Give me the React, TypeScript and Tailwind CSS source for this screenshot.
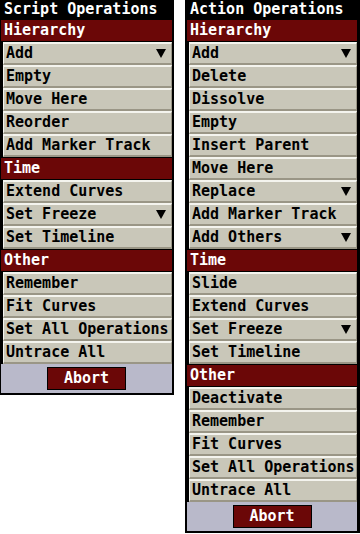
import React from 'react'

type Entry = { label: string; menu?: boolean }
type Group = { title: string; items: Entry[] }

const scriptOps: Group[] = [
  {
    title: 'Hierarchy',
    items: [
      { label: 'Add', menu: true },
      { label: 'Empty' },
      { label: 'Move Here' },
      { label: 'Reorder' },
      { label: 'Add Marker Track' },
    ],
  },
  {
    title: 'Time',
    items: [{ label: 'Extend Curves' }, { label: 'Set Freeze', menu: true }, { label: 'Set Timeline' }],
  },
  {
    title: 'Other',
    items: [{ label: 'Remember' }, { label: 'Fit Curves' }, { label: 'Set All Operations' }, { label: 'Untrace All' }],
  },
]

const actionOps: Group[] = [
  {
    title: 'Hierarchy',
    items: [
      { label: 'Add', menu: true },
      { label: 'Delete' },
      { label: 'Dissolve' },
      { label: 'Empty' },
      { label: 'Insert Parent' },
      { label: 'Move Here' },
      { label: 'Replace', menu: true },
      { label: 'Add Marker Track' },
      { label: 'Add Others', menu: true },
    ],
  },
  {
    title: 'Time',
    items: [
      { label: 'Slide' },
      { label: 'Extend Curves' },
      { label: 'Set Freeze', menu: true },
      { label: 'Set Timeline' },
    ],
  },
  {
    title: 'Other',
    items: [
      { label: 'Deactivate' },
      { label: 'Remember' },
      { label: 'Fit Curves' },
      { label: 'Set All Operations' },
      { label: 'Untrace All' },
    ],
  },
]

function Arrow() {
  return (
    <svg width="10" height="9" viewBox="0 0 10 9" className="shrink-0">
      <polygon points="0,0 10,0 5,9" fill="#000" />
    </svg>
  )
}

// bevelled menu row
function Item({ entry }: { entry: Entry }) {
  return (
    <div className="ml-[2px] h-[23px] flex items-center justify-between pl-[2px] pr-[5px] whitespace-nowrap border-t-2 border-l border-t-[#f4f4ee] border-l-[#f4f4ee] border-b-2 border-r border-b-[#9a9686] border-r-[#9a9686] bg-[#c9c7b9] text-black">
      <span className="leading-none">{entry.label}</span>
      {entry.menu && <Arrow />}
    </div>
  )
}

function Panel({ title, groups, pad }: { title: string; groups: Group[]; pad: string }) {
  return (
    <div className={`bg-black flex flex-col pb-[2px] ${pad}`}>
      <div className="h-[19px] flex items-center pl-[3px] text-white leading-none whitespace-nowrap">{title}</div>
      {groups.map((g) => (
        <div key={g.title} className="flex flex-col">
          <div className="h-[23px] py-[1px]">
            <div className="h-full flex items-center pl-[3px] text-white leading-none bg-[#6b0707]">{g.title}</div>
          </div>
          {g.items.map((it) => (
            <Item key={it.label} entry={it} />
          ))}
        </div>
      ))}
      <div className="h-[29px] flex items-center justify-center bg-[#b9b9ca]">
        <div className="w-[79px] h-[23px] flex items-center justify-center border border-black text-white leading-none bg-[#6b0707]">
          Abort
        </div>
      </div>
    </div>
  )
}

export default function App() {
  return (
    <div className="w-[360px] h-[534px] bg-white flex items-start gap-[11px] font-['DejaVu_Sans_Mono',monospace] font-bold text-[15px] overflow-hidden">
      <div className="w-[174px]">
        <Panel title="Script Operations" groups={scriptOps} pad="pl-px pr-[2px]" />
      </div>
      <div className="w-[175px]">
        <Panel title="Action Operations" groups={actionOps} pad="pl-[2px] pr-[3px]" />
      </div>
    </div>
  )
}
